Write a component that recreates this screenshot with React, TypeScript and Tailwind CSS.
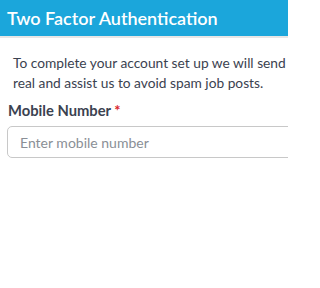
export default function App() {
  return (
    <div className="w-[288px] h-[288px] overflow-hidden bg-white font-['Lato',sans-serif]">
      <div className="w-[480px]">
        <div className="h-[36px] bg-[#1ba6db] border-b-2 border-[#e6e6e6] box-content flex items-center px-[7px]">
          <h2 className="text-white text-[18px] font-semibold leading-none">Two Factor Authentication</h2>
        </div>
        <div className="px-[7px] pt-[15px]">
          <p className="pl-[6px] text-[13.75px] leading-[20px] text-[#3b4250]">
            To complete your account set up we will send a code to ensure you are
            <br />
            real and assist us to avoid spam job posts.
          </p>
          <label className="block mt-[7px] pl-[1px] text-[14.75px] font-bold text-[#3b4250] leading-[20px]">
            Mobile Number <span className="text-[#d9252a]">*</span>
          </label>
          <input
            className="mt-[6px] w-full h-[32px] border border-[#c8c8c8] rounded-[5px] px-[12px] text-[14px] placeholder:text-[#8a8f96] outline-none"
            placeholder="Enter mobile number"
          />
        </div>
      </div>
    </div>
  );
}
